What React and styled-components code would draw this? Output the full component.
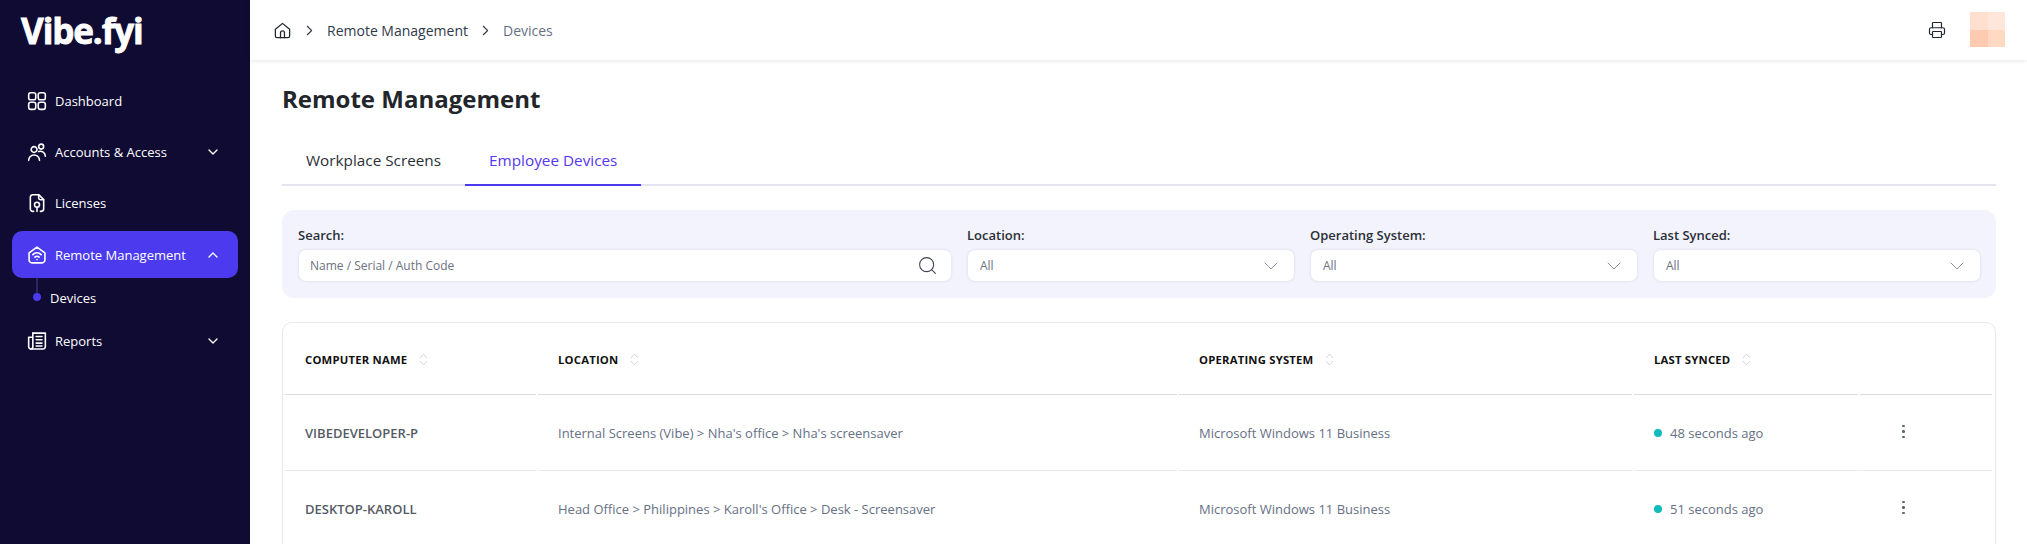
import React from 'react';
import styled, { createGlobalStyle } from 'styled-components';
import { ChevronDown, ChevronUp, ChevronRight, Printer, Search } from 'lucide-react';

const GlobalStyle = createGlobalStyle`
  html, body { margin: 0; padding: 0; background: #fff; }
  body { font-family: "Open Sans", "Noto Sans", sans-serif; overflow: hidden; }
  * { box-sizing: border-box; }
`;

const Shell = styled.div`
  display: flex;
  height: 544px;
  overflow: hidden;
`;

const Sidebar = styled.aside`
  width: 250px;
  flex: none;
  background: #0f0b33;
  color: #fff;
  padding: 0 12px;
`;

const Logo = styled.div`
  height: 62px;
  padding: 7px 0 0 9px;
  font-family: "Open Sans", sans-serif;
  font-size: 35px;
  font-weight: 700;
  line-height: 48px;
  letter-spacing: -1.1px;
  -webkit-text-stroke: 0.8px #fff;
`;

const Nav = styled.nav`
  display: flex;
  flex-direction: column;
  padding-top: 13px;
`;

const NavItem = styled.div`
  display: flex;
  align-items: center;
  height: ${p => (p.$active ? '47px' : '51px')};
  margin-top: ${p => (p.$active ? '3px' : '0')};
  padding: 0 17px 0 15px;
  gap: 8px;
  border-radius: 10px;
  background: ${p => (p.$active ? '#4c3bee' : 'transparent')};
  font-size: 13px;
  color: #fff;
  svg { flex: none; }
`;

const NavLabel = styled.span`
  flex: 1;
`;

const SubItem = styled.div`
  position: relative;
  display: flex;
  align-items: center;
  height: 37px;
  padding: 2px 0 0 38px;
  font-size: 13px;
  color: #fff;
  &::before {
    content: '';
    position: absolute;
    left: 24px;
    top: 0;
    width: 2px;
    height: 15px;
    background: #2a2760;
  }
  &::after {
    content: '';
    position: absolute;
    left: 21px;
    top: 15px;
    width: 8px;
    height: 8px;
    border-radius: 50%;
    background: #4c3bee;
  }
`;

const Main = styled.main`
  flex: 1;
  min-width: 0;
`;

const Topbar = styled.header`
  display: flex;
  align-items: center;
  height: 60px;
  padding: 0 22px 0 23px;
  background: #fff;
  box-shadow: 0 1px 4px rgba(0, 0, 0, 0.1);
`;

const Crumbs = styled.div`
  display: flex;
  align-items: center;
  flex: 1;
  gap: 9px;
  font-size: 14px;
  color: #2f3a4a;
`;

const CrumbLast = styled.span`
  color: #667085;
`;

const Avatar = styled.div`
  display: grid;
  grid-template-columns: 18px 17px;
  grid-template-rows: 18px 17px;
  margin-left: 24px;
  margin-top: -1px;
`;

const AvatarCell = styled.span`
  background: ${p => p.$color};
`;

const Content = styled.div`
  padding: 24px 31px 0 32px;
`;

const Title = styled.h1`
  margin: 0;
  font-family: "Open Sans", sans-serif;
  font-size: 24px;
  line-height: 30px;
  font-weight: 700;
  color: #22262b;
`;

const Tabs = styled.div`
  display: flex;
  height: 50px;
  margin-top: 22px;
  border-bottom: 2px solid #e4e4ee;
`;

const Tab = styled.div`
  display: flex;
  align-items: center;
  height: 50px;
  padding: 0 24px;
  font-size: 15.3px;
  color: ${p => (p.$active ? '#5438f0' : '#2a2f36')};
  border-bottom: 2px solid ${p => (p.$active ? '#4c3bee' : 'transparent')};
`;

const Filters = styled.section`
  display: grid;
  grid-template-columns: 2fr 1fr 1fr 1fr;
  gap: 17px;
  height: 88px;
  margin-top: 24px;
  padding: 16px 16px 0 17px;
  border-radius: 12px;
  background: #f3f3fd;
`;

const Field = styled.div`
  display: flex;
  flex-direction: column;
  min-width: 0;
`;

const FieldLabel = styled.label`
  height: 24px;
  margin-left: -1px;
  font-size: 13px;
  line-height: 18px;
  font-weight: 600;
  color: #2a2f36;
`;

const Control = styled.div`
  display: flex;
  align-items: center;
  justify-content: space-between;
  height: 31px;
  padding: 0 ${p => (p.$search ? '13px' : '11px')} 0 ${p => (p.$search ? '11px' : '12px')};
  border-radius: 7px;
  background: #fff;
  box-shadow: 0 0 3px rgba(40, 40, 90, 0.14);
  font-size: 12px;
  color: #6b7280;
`;

const TableBox = styled.div`
  margin-top: 24px;
  height: 300px;
  border: 1px solid #e6e8ec;
  border-radius: 10px;
  overflow: hidden;
`;

const Table = styled.table`
  width: 1711px;
  table-layout: fixed;
  border-collapse: separate;
  border-spacing: 2px 0;
`;

const Th = styled.th`
  height: 72px;
  padding: 4px 20px 0;
  text-align: left;
  font-size: 11.3px;
  font-weight: 700;
  letter-spacing: 0.2px;
  color: #111;
  border-bottom: 1px solid #d9dce2;
`;

const SortWrap = styled.span`
  display: inline-block;
  margin-left: 12px;
  vertical-align: middle;
`;

const Td = styled.td`
  height: 76px;
  padding: 0 20px;
  font-size: 13px;
  font-weight: ${p => (p.$strong ? 600 : 400)};
  color: ${p => (p.$strong ? '#555b65' : '#667085')};
  border-bottom: 1px solid #e6e8ec;
`;

const Status = styled.span`
  display: inline-flex;
  align-items: center;
  gap: 8px;
`;

const Dot = styled.span`
  width: 8px;
  height: 8px;
  border-radius: 50%;
  background: #0fbcb9;
`;

const Kebab = styled.div`
  display: flex;
  flex-direction: column;
  gap: 3px;
  width: 3px;
  margin: -2px 0 0 22px;
  span {
    width: 2.5px;
    height: 2.5px;
    border-radius: 50%;
    background: #5d6472;
  }
`;

const Stroke = ({ size = 20, children, color = 'currentColor', width = 1.9 }) => (
  <svg width={size} height={size} viewBox="0 0 24 24" fill="none" stroke={color} strokeWidth={width} strokeLinecap="round" strokeLinejoin="round">
    {children}
  </svg>
);

const DashIcon = () => (
  <Stroke>
    <rect x="2" y="2" width="8.5" height="8.5" rx="2.5" />
    <rect x="13.5" y="2" width="8.5" height="8.5" rx="2.5" />
    <rect x="2" y="13.5" width="8.5" height="8.5" rx="2.5" />
    <rect x="13.5" y="13.5" width="8.5" height="8.5" rx="2.5" />
  </Stroke>
);

const UsersIcon = () => (
  <Stroke>
    <circle cx="8.5" cy="9" r="3.5" />
    <circle cx="17" cy="5.5" r="3" />
    <path d="M2 22a6.5 6.5 0 0 1 13 0" />
    <path d="M14 11.5a6 6 0 0 1 8 5.5" />
  </Stroke>
);

const LicenseIcon = () => (
  <Stroke>
    <path d="M8 22H7a3 3 0 0 1-3-3V5a3 3 0 0 1 3-3h7l6 6v11a3 3 0 0 1-3 3h-1" />
    <path d="M14 2v4a2 2 0 0 0 2 2h4" />
    <circle cx="12" cy="14" r="3" />
    <path d="M12 17v5" />
  </Stroke>
);

const WifiHomeIcon = () => (
  <Stroke>
    <path d="M2.5 9.5 12 2.5l9.5 7V18a3.5 3.5 0 0 1-3.5 3.5H6A3.5 3.5 0 0 1 2.5 18z" />
    <path d="M7 11.5a7 7 0 0 1 10 0" />
    <path d="M9.5 14.5a3.5 3.5 0 0 1 5 0" />
    <path d="M12 17.5h.01" />
  </Stroke>
);

const ReportIcon = () => (
  <Stroke>
    <path d="M7 2.5h15V19a2.5 2.5 0 0 1-2.5 2.5H4.5" />
    <path d="M7 7.5H2V19a2.5 2.5 0 0 0 5 0V2.5" />
    <path d="M11 6.5h7M11 10.5h7M11 14.5h7M11 18h7" />
  </Stroke>
);

const HomeIcon = () => (
  <Stroke size={19} width={1.6} color="#1f2733">
    <path d="M3 10.5 12 3l9 7.5V19a2 2 0 0 1-2 2H5a2 2 0 0 1-2-2z" />
    <path d="M9.5 21v-6a2.5 2.5 0 0 1 5 0v6" />
  </Stroke>
);

const SortIcon = () => (
  <SortWrap>
    <svg width="9" height="13" viewBox="0 0 9 13" fill="none" stroke="#d2d5da" strokeWidth="1">
      <path d="M1 5l3.5-4L8 5" />
      <path d="M1 8l3.5 4L8 8" />
    </svg>
  </SortWrap>
);

const filters = [
  { label: 'Location:' },
  { label: 'Operating System:' },
  { label: 'Last Synced:' },
];

const columns = [
  { label: 'COMPUTER NAME', width: 251, sort: true },
  { label: 'LOCATION', width: 639, sort: true },
  { label: 'OPERATING SYSTEM', width: 453, sort: true },
  { label: 'LAST SYNCED', width: 224, sort: true },
  { label: '', width: 132, sort: false },
];

const devices = [
  {
    name: 'VIBEDEVELOPER-P',
    location: "Internal Screens (Vibe) > Nha's office > Nha's screensaver",
    os: 'Microsoft Windows 11 Business',
    synced: '48 seconds ago',
  },
  {
    name: 'DESKTOP-KAROLL',
    location: "Head Office > Philippines > Karoll's Office > Desk - Screensaver",
    os: 'Microsoft Windows 11 Business',
    synced: '51 seconds ago',
  },
];

const App = () => (
  <Shell>
    <GlobalStyle />
    <Sidebar>
      <Logo>Vibe.fyi</Logo>
      <Nav>
        <NavItem><DashIcon /><NavLabel>Dashboard</NavLabel></NavItem>
        <NavItem><UsersIcon /><NavLabel>Accounts &amp; Access</NavLabel><ChevronDown size={16} strokeWidth={2} /></NavItem>
        <NavItem><LicenseIcon /><NavLabel>Licenses</NavLabel></NavItem>
        <NavItem $active><WifiHomeIcon /><NavLabel>Remote Management</NavLabel><ChevronUp size={16} strokeWidth={2} /></NavItem>
        <SubItem>Devices</SubItem>
        <NavItem><ReportIcon /><NavLabel>Reports</NavLabel><ChevronDown size={16} strokeWidth={2} /></NavItem>
      </Nav>
    </Sidebar>
    <Main>
      <Topbar>
        <Crumbs>
          <HomeIcon />
          <ChevronRight size={17} strokeWidth={1.5} />
          <span>Remote Management</span>
          <ChevronRight size={17} strokeWidth={1.5} />
          <CrumbLast>Devices</CrumbLast>
        </Crumbs>
        <Printer size={18} strokeWidth={1.6} color="#1f2733" />
        <Avatar>
          <AvatarCell $color="#ffdfcf" />
          <AvatarCell $color="#ffe6da" />
          <AvatarCell $color="#ffcbb0" />
          <AvatarCell $color="#ffd9c2" />
        </Avatar>
      </Topbar>
      <Content>
        <Title>Remote Management</Title>
        <Tabs>
          <Tab>Workplace Screens</Tab>
          <Tab $active>Employee Devices</Tab>
        </Tabs>
        <Filters>
          <Field>
            <FieldLabel>Search:</FieldLabel>
            <Control $search>
              Name / Serial / Auth Code
              <Search size={21} strokeWidth={1.2} color="#3d4450" />
            </Control>
          </Field>
          {filters.map(f => (
            <Field key={f.label}>
              <FieldLabel>{f.label}</FieldLabel>
              <Control>
                All
                <ChevronDown size={24} strokeWidth={1} color="#8a90a0" />
              </Control>
            </Field>
          ))}
        </Filters>
        <TableBox>
          <Table>
            <colgroup>
              {columns.map((c, i) => <col key={i} style={{ width: c.width }} />)}
            </colgroup>
            <thead>
              <tr>
                {columns.map((c, i) => (
                  <Th key={i}>{c.label}{c.sort && <SortIcon />}</Th>
                ))}
              </tr>
            </thead>
            <tbody>
              {devices.map(d => (
                <tr key={d.name}>
                  <Td $strong>{d.name}</Td>
                  <Td>{d.location}</Td>
                  <Td>{d.os}</Td>
                  <Td><Status><Dot />{d.synced}</Status></Td>
                  <Td><Kebab><span /><span /><span /></Kebab></Td>
                </tr>
              ))}
            </tbody>
          </Table>
        </TableBox>
      </Content>
    </Main>
  </Shell>
);

export default App;
